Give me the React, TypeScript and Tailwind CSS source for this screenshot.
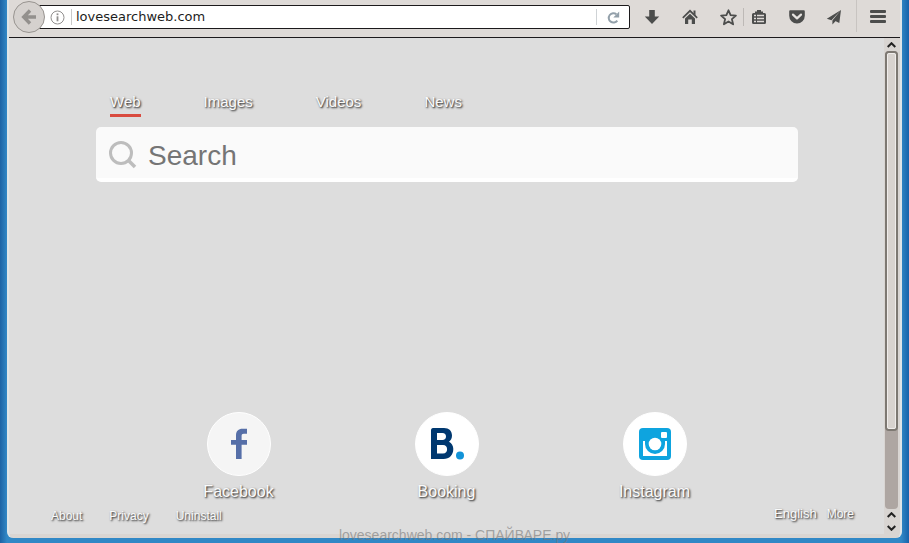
import type { ReactNode } from "react";

const tabs = ["Web", "Images", "Videos", "News"];
const footerLinks = ["About", "Privacy", "Uninstall"];

const raised = "text-[#fafafa] [text-shadow:1px_1px_2px_#111]";

function ToolButton({ label, width, children }: { label: string; width: string; children: ReactNode }) {
  return (
    <button type="button" aria-label={label} className={`flex h-8 shrink-0 items-center justify-center text-[#4c4d4c] ${width}`}>
      {children}
    </button>
  );
}

function Toolbar() {
  return (
    <header className="flex h-[38px] shrink-0 items-start border-b border-[#1c1a1c] bg-[#dedad7] pt-px pr-px pl-1">
      <button
        type="button"
        aria-label="Back"
        className="z-10 flex size-8 shrink-0 items-center justify-center rounded-full border border-[#989490] bg-[#d5d1ce]"
      >
        <svg width="16" height="16" viewBox="0 0 16 16" fill="none" stroke="#93908d" strokeWidth="3.4">
          <path d="M9 1.5 2.7 8 9 14.5M3 8h12" />
        </svg>
      </button>
      <form className="mt-1 -ml-4 flex h-6 min-w-0 flex-1 items-center rounded-r-xs border border-[#1c1a1c] bg-white pl-5">
        <svg width="15" height="15" viewBox="0 0 15 15" fill="none" stroke="#92908f" className="shrink-0">
          <circle cx="7.5" cy="7.5" r="6.5" />
          <path d="M7.5 6.3v5" strokeWidth="1.8" />
          <path d="M7.5 3.4v1.8" strokeWidth="1.8" />
        </svg>
        <span className="ml-1.5 h-4 w-px shrink-0 bg-[#c9c9c9]" />
        <input
          aria-label="Address"
          defaultValue="lovesearchweb.com"
          className="ml-1 min-w-0 flex-1 bg-transparent font-['DejaVu_Sans',sans-serif] text-[13px] leading-5 text-[#1d1d1d] outline-none"
        />
        <span className="h-4 w-px shrink-0 bg-[#cfd3d6]" />
        <button type="button" aria-label="Reload" className="flex w-8 shrink-0 items-center justify-center">
          <svg width="13" height="13" viewBox="0 0 13 13" fill="none">
            <path d="M10.3 9.6A4.7 4.7 0 1 1 9.4 3.2" stroke="#93a0aa" strokeWidth="2" />
            <path d="M12.2.6v6H6.3z" fill="#93a0aa" />
          </svg>
        </button>
      </form>
      <nav aria-label="Browser tools" className="ml-[3px] flex shrink-0">
        <ToolButton label="Downloads" width="w-[38px]">
          <svg width="16" height="16" viewBox="0 0 16 16" fill="currentColor">
            <path d="M5.2 1h5.600v6.600h4.400L8 15 .8 7.600h4.400z" />
          </svg>
        </ToolButton>
        <ToolButton label="Home" width="w-[38px]">
          <svg width="16" height="16" viewBox="0 0 16 16" fill="none">
            <path d="M.8 8.800 8 1.800l7.200 7" stroke="currentColor" strokeWidth="1.700" />
            <path d="M11.500 1.500h2v5l-2-2z" fill="currentColor" />
            <path d="M8 4.800 13 9.600V15H9.800v-4.500H6.200V15H3V9.600z" fill="currentColor" />
          </svg>
        </ToolButton>
        <span className="w-1" />
        <ToolButton label="Bookmark" width="w-[30px]">
          <svg width="17" height="17" viewBox="0 0 17 17" fill="none" stroke="currentColor" strokeWidth="1.8" strokeLinejoin="round">
            <path d="m8.500 1.300 2.100 4.800 5.300.5-4 3.500 1.200 5.200-4.600-2.800-4.600 2.800 1.200-5.200-4-3.500 5.300-.5z" />
          </svg>
        </ToolButton>
        <span className="mt-[7px] h-[18px] w-px bg-[#bdb9b6]" />
        <ToolButton label="Bookmarks list" width="w-[30px]">
          <svg width="16" height="16" viewBox="0 0 16 16">
            <path d="M6 1h4v1.500h2V4h1.500A1.500 1.500 0 0 1 15 5.500v8a1.500 1.500 0 0 1-1.500 1.500h-11A1.500 1.500 0 0 1 1 13.500v-8A1.500 1.500 0 0 1 2.500 4H4V2.500h2z" fill="currentColor" />
            <path d="M3 6.500h2M6 6.500h7M3 9.500h2M6 9.500h7M3 12.500h2M6 12.500h7" stroke="#dedad7" strokeWidth="1.500" />
          </svg>
        </ToolButton>
        <span className="w-1" />
        <ToolButton label="Pocket" width="w-[38px]">
          <svg width="16" height="16" viewBox="0 0 16 16">
            <path d="M1.500 1.300h13c.9 0 1.300.5 1.300 1.300v4.200a7.800 7.800 0 0 1-15.600 0V2.600c0-.8.4-1.300 1.300-1.300z" fill="currentColor" />
            <path d="M4 5.600 8 9.400l4-3.800" fill="none" stroke="#e6e3e0" strokeWidth="2.200" strokeLinecap="round" strokeLinejoin="round" />
          </svg>
        </ToolButton>
        <ToolButton label="Send tab" width="w-9">
          <svg width="16" height="16" viewBox="0 0 16 16" fill="currentColor">
            <path d="M15 1 .8 9.700l4.700 1.500zM15 1 6.400 11.500v4L9 12.700zM15 1 9.300 12l4 2z" />
          </svg>
        </ToolButton>
        <span className="ml-1 -mt-px h-8 w-px bg-[#c8c4c1]" />
        <ToolButton label="Open menu" width="w-[42px]">
          <svg width="16" height="14" viewBox="0 0 16 14" fill="currentColor">
            <rect y="0" width="16" height="3" rx="1" />
            <rect y="5" width="16" height="3" rx="1" />
            <rect y="10" width="16" height="3" rx="1" />
          </svg>
        </ToolButton>
      </nav>
    </header>
  );
}

function Tile({ name, tint, children }: { name: string; tint: string; children: ReactNode }) {
  return (
    <a href="#" className="flex w-52 flex-col items-center gap-1.5">
      <span className={`flex size-16 items-center justify-center rounded-full border border-white ${tint}`}>{children}</span>
      <span className={`text-base leading-5 ${raised}`}>{name}</span>
    </a>
  );
}

function Chevron({ d }: { d: string }) {
  return (
    <svg width="9" height="6" viewBox="0 0 9 6" fill="none" stroke="#222" strokeWidth="2">
      <path d={d} />
    </svg>
  );
}

function Scrollbar() {
  return (
    <div className="flex w-[15px] shrink-0 flex-col items-center bg-[#d9d5d2]">
      <div className="flex h-[13px] items-center">
        <Chevron d="M.7 5 4.500 1.200 8.300 5" />
      </div>
      <div className="flex w-[13px] flex-1 flex-col rounded-sm bg-[#aea6a2]">
        <div className="h-[83%] w-full rounded-sm border-2 border-[#7d7872] bg-[#d8d3cf]">
          <div className="h-full rounded-xs border border-[#efecea]" />
        </div>
      </div>
      <div className="flex h-[25px] flex-col items-center justify-around">
        <Chevron d="M.7 5 4.500 1.200 8.300 5" />
        <Chevron d="M.7 1 4.500 4.800 8.300 1" />
      </div>
    </div>
  );
}

function Page() {
  return (
    <main className="flex min-w-0 flex-1 flex-col bg-[#ddd] pt-[55px] pb-2.5 font-['Liberation_Sans',Arial,sans-serif]">
      <nav aria-label="Search type" className="ml-[101px] flex gap-[63px]">
        {tabs.map((tab, i) => (
          <a
            key={tab}
            href="#"
            className={`border-b-[3px] pb-[3px] text-[15px] leading-[18px] ${raised} ${i === 0 ? "border-[#d94b3f]" : "border-transparent"}`}
          >
            {tab}
          </a>
        ))}
      </nav>
      <form role="search" className="mt-2.5 mr-[86px] ml-[87px] flex h-[55px] shrink-0 items-center rounded-[5px] border-b-4 border-white bg-[#fafafa] pt-1 pl-3">
        <svg width="30" height="30" viewBox="0 0 30 30" fill="none" stroke="#bdbdbd" strokeWidth="3" className="shrink-0">
          <circle cx="13" cy="13" r="10.500" />
          <path d="m20.500 20.500 6.500 6.500" strokeWidth="3.500" />
        </svg>
        <input
          type="text"
          aria-label="Search"
          placeholder="Search"
          className="ml-2.5 min-w-0 flex-1 bg-transparent pt-0.5 text-[28px] leading-9 outline-none placeholder:text-[#757575]"
        />
      </form>
      <section aria-label="Popular sites" className="mt-auto flex justify-center">
        <Tile name="Facebook" tint="bg-[#f5f5f5]">
          <svg width="18" height="32" viewBox="0 0 18 32" fill="#566fa8">
            <path d="M17 .8v5h-3.200c-1.600 0-2.200.8-2.200 2.300V12H17v4.800h-5.400V31H6V16.800H1V12h5V7.500C6 3 8.500.8 12.500.8z" />
          </svg>
        </Tile>
        <Tile name="Booking" tint="bg-white">
          <svg width="36" height="34" viewBox="0 0 36 34">
            <path
              d="M4 1h11c5.200 0 8 3 8 7.500 0 3-1.200 4.800-3 6.200 2.700 1.300 4.300 4 4.300 7.300 0 6-3.800 10-9.800 10H2V3.500C2 2 2.700 1 4 1zm4 5v7h5.500c2.200 0 3.500-1.400 3.500-3.500S15.700 6 13.500 6zm0 12v8.500h6c2.700 0 4.100-1.700 4.100-4.200S16.700 18 14 18z"
              fill="#003870"
              fillRule="evenodd"
            />
            <circle cx="31" cy="28.500" r="4" fill="#1293d8" />
          </svg>
        </Tile>
        <Tile name="Instagram" tint="bg-white">
          <svg width="32" height="32" viewBox="0 0 32 32">
            <rect width="32" height="32" rx="4" fill="#0ea4df" />
            <path d="M4 13h24v15H4z" fill="white" />
            <path d="M6 10h20v6a10 10 0 0 1-20 0z" fill="#0ea4df" />
            <circle cx="16" cy="16" r="6.300" fill="white" />
            <rect x="22" y="4" width="6" height="6" rx="1" fill="white" />
          </svg>
        </Tile>
      </section>
      <footer className={`mt-1.5 flex items-start justify-between pr-[30px] pl-[42px] text-xs ${raised}`}>
        <nav aria-label="Site" className="flex gap-[27px] leading-4">
          {footerLinks.map((link) => (
            <a key={link} href="#">
              {link}
            </a>
          ))}
        </nav>
        <div className="flex gap-2.5 leading-3">
          <button type="button" className={`text-[13px] leading-3 ${raised}`}>
            English
          </button>
          <a href="#">More</a>
        </div>
      </footer>
    </main>
  );
}

export default function App() {
  return (
    <div className="relative flex h-screen flex-col overflow-hidden bg-[#2a7fc0] bg-[linear-gradient(90deg,#1c63a5_0,#3188c6_7px,#3188c6_calc(100%-8px),#1763ab_100%)] pr-[7px] pb-[5px] pl-[7px]">
      <div className="flex min-h-0 flex-1 flex-col rounded-b-md border-x-2 border-[#dfe5e8] bg-[#d9d5d2] pb-1">
        <Toolbar />
        <div className="flex min-h-0 flex-1 pr-px">
          <Page />
          <Scrollbar />
        </div>
      </div>
      <p className="absolute inset-x-0 bottom-0 text-center font-['Liberation_Sans',Arial,sans-serif] text-sm leading-4 text-[#777]/60">
        lovesearchweb.com - СПАЙВАРЕ.ру
      </p>
    </div>
  );
}
